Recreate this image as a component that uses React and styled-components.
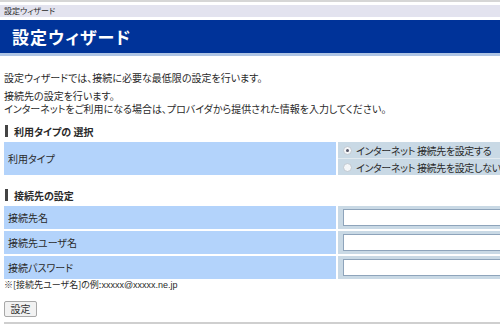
import React from "react";
import styled, { createGlobalStyle } from "styled-components";

const Global = createGlobalStyle`
  html, body { margin: 0; padding: 0; background: #fff; overflow: hidden; }
  body {
    font-family: "Noto Sans CJK JP", "Liberation Sans", sans-serif;
    font-size: 10px;
    color: #2a2a2a;
    font-feature-settings: "palt";
  }
`;

const Page = styled.div`
  width: 500px;
  height: 326px;
  overflow: hidden;
  border-top: 2px solid #d6d6d6;
  box-sizing: border-box;
`;

const Crumb = styled.div`
  margin-top: 3px;
  height: 12px;
  background: #e3e3ef;
  font-size: 8px;
  line-height: 12px;
  padding-left: 4px;
`;

const TitleBar = styled.h1`
  margin: 3px 0 0;
  height: 33px;
  background: #003399;
  border-bottom: 3px solid #aec4e4;
  color: #fff;
  font-size: 17px;
  font-weight: bold;
  letter-spacing: 1px;
  line-height: 33px;
  padding-left: 12px;
`;

const Content = styled.div`
  padding: 0 0 0 4px;
`;

const Para = styled.p`
  margin: ${(p) => p.$mt}px 0 0;
  line-height: ${(p) => p.$lh || 11}px;
  white-space: nowrap;
`;

const Heading = styled.h2`
  margin: ${(p) => p.$mt}px 0 0;
  display: flex;
  align-items: center;
  gap: 6px;
  height: 12px;
  font-size: 10px;
  font-weight: bold;
  &::before {
    content: "";
    width: 3px;
    height: 12px;
    margin-left: 1px;
    background: #444;
  }
`;

const FormTable = styled.div`
  margin-top: ${(p) => p.$mt}px;
  display: grid;
  grid-template-columns: 332px 220px;
  column-gap: 2px;
  row-gap: 2px;
`;

const LabelCell = styled.div`
  background: #b3d3fb;
  display: flex;
  align-items: center;
  padding-left: 4px;
  height: ${(p) => p.$h}px;
`;

const ValueCell = styled.div`
  background: #c9d9e5;
  display: flex;
  flex-direction: column;
  height: ${(p) => p.$h}px;
`;

const RadioRow = styled.label`
  flex: 1;
  display: flex;
  align-items: center;
  gap: 4px;
  padding-left: 5px;
  white-space: nowrap;
  letter-spacing: -0.35px;
  & + & {
    border-top: 1px solid #e2eaf0;
  }
`;

const RadioDot = styled.span`
  width: 7px;
  height: 7px;
  border-radius: 50%;
  border: 1px solid #c0c8d0;
  background: #f4f6f8;
  position: relative;
  flex: none;
  &::after {
    content: "";
    display: ${(p) => (p.$checked ? "block" : "none")};
    position: absolute;
    left: 2px;
    top: 2px;
    width: 3px;
    height: 3px;
    border-radius: 50%;
    background: #556;
  }
`;

const InputCell = styled.div`
  background: #c9d9e5;
  height: 23px;
  display: flex;
  align-items: center;
  padding-left: 5px;
`;

const TextInput = styled.input`
  width: 200px;
  height: 17px;
  box-sizing: border-box;
  border: 1px solid #8ea4bb;
  background: #fff;
  padding: 0 2px;
  margin: 0;
  outline: none;
`;

const Note = styled.div`
  margin-top: 0;
  font-size: 9px;
  line-height: 11px;
  white-space: nowrap;
`;

const Small = styled.span`
  font-size: 9px;
  font-family: "Liberation Sans", sans-serif;
`;

const Button = styled.button`
  margin-top: 10px;
  width: 33px;
  height: 16px;
  padding: 0;
  font-family: inherit;
  font-size: 10px;
  line-height: 14px;
  color: #333;
  background: #f2f2f2;
  border: 1px solid #a8a8a8;
  border-radius: 2px;
  display: block;
`;

const Rule = styled.hr`
  margin: 5px 0 0;
  border: none;
  border-top: 2px solid #cfcfcf;
`;

export default function App() {
  return (
    <>
      <Global />
      <Page>
        <Crumb>設定ウィザード</Crumb>
        <TitleBar>設定ウィザード</TitleBar>
        <Content>
          <Para $mt={16}>設定ウィザードでは、接続に必要な最低限の設定を行います。</Para>
          <Para $mt={6} $lh={13}>
            接続先の設定を行います。
            <br />
            インターネットをご利用になる場合は、プロバイダから提供された情報を入力してください。
          </Para>
          <Heading $mt={10}>利用タイプの 選択</Heading>
          <FormTable $mt={5}>
            <LabelCell $h={33}>利用タイプ</LabelCell>
            <ValueCell $h={33}>
              <RadioRow>
                <RadioDot $checked />
                インターネット 接続先を設定する
              </RadioRow>
              <RadioRow>
                <RadioDot />
                インターネット 接続先を設定しない
              </RadioRow>
            </ValueCell>
          </FormTable>
          <Heading $mt={14}>接続先の設定</Heading>
          <FormTable $mt={5}>
            <LabelCell $h={23}>接続先名</LabelCell>
            <InputCell>
              <TextInput type="text" />
            </InputCell>
            <LabelCell $h={23}>接続先ユーザ名</LabelCell>
            <InputCell>
              <TextInput type="text" />
            </InputCell>
            <LabelCell $h={23}>接続パスワード</LabelCell>
            <InputCell>
              <TextInput type="password" />
            </InputCell>
          </FormTable>
          <Note>
            ※[接続先ユーザ名]の例:<Small>xxxxx@xxxxx.ne.jp</Small>
          </Note>
          <Button>設定</Button>
          <Rule />
        </Content>
      </Page>
    </>
  );
}
